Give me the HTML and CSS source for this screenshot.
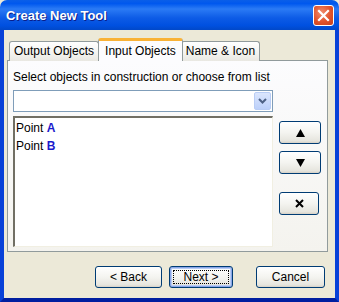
FILE: index.html
```html
<!DOCTYPE html>
<html lang="en">
  <head>
    <meta charset="UTF-8" />
    <title>Create New Tool</title>
    <link rel="stylesheet" href="styles.css">
  </head>
  <body>
    <div class="window">
      <div class="titlebar">
        <span class="title">Create New Tool</span>
        <span class="close">
          <svg width="13" height="13" viewBox="0 0 13 13">
            <path d="M2 2 L11 11 M11 2 L2 11" stroke="#fff" stroke-width="2.2" stroke-linecap="square" />
          </svg>
        </span>
      </div>
      <div class="client">
        <div class="tabs">
          <div class="tab">Output Objects</div>
          <div class="tab active">Input Objects</div>
          <div class="tab">Name &amp; Icon</div>
        </div>
        <div class="panel">
          <div class="hint">Select objects in construction or choose from list</div>
          <div class="combo">
            <span class="combo-btn">
              <svg width="9" height="6" viewBox="0 0 9 6">
                <path d="M1 1 L4.5 4.5 L8 1" fill="none" stroke="#4d6185" stroke-width="2" />
              </svg>
            </span>
          </div>
          <div class="list-row">
            <div class="list">
              <div class="item">Point <b>A</b></div>
              <div class="item">Point <b>B</b></div>
            </div>
            <div class="side">
              <button class="btn small">
                <svg width="9" height="8" viewBox="0 0 9 8"><path d="M4.5 0 L9 8 L0 8 Z" fill="#000" /></svg>
              </button>
              <button class="btn small">
                <svg width="9" height="8" viewBox="0 0 9 8"><path d="M0 0 L9 0 L4.5 8 Z" fill="#000" /></svg>
              </button>
              <button class="btn small del">
                <svg width="9" height="9" viewBox="0 0 9 9"><path d="M1 1 L8 8 M8 1 L1 8" stroke="#000" stroke-width="2" /></svg>
              </button>
            </div>
          </div>
        </div>
        <div class="footer">
          <button class="btn back">&lt; Back</button>
          <button class="btn next"><span class="focus">Next &gt;</span></button>
          <button class="btn cancel">Cancel</button>
        </div>
      </div>
    </div>
  </body>
</html>
```

FILE: styles.css
```css
* {
  padding: 0;
  margin: 0;
  box-sizing: border-box;
  font-family: "Liberation Sans", Arial, sans-serif;
}

body {
  width: 339px;
  height: 302px;
  overflow: hidden;
  background: #ece9d8;
}

.window {
  width: 339px;
  height: 302px;
  display: flex;
  flex-direction: column;
}

.titlebar {
  height: 30px;
  display: flex;
  align-items: center;
  justify-content: space-between;
  padding: 0 5px 0 6px;
  border-radius: 7px 7px 0 0;
  background: linear-gradient(#0a5ee8, #0058ee 12%, #2b7bf5 30%, #0d5be6 60%, #0050e0 85%, #0148c8);
}

.title {
  color: #fff;
  font-weight: bold;
  font-size: 13px;
  text-shadow: 1px 1px 0 #0a1e8a;
}

.close {
  width: 21px;
  height: 21px;
  display: flex;
  align-items: center;
  justify-content: center;
  border: 1px solid #fff;
  border-radius: 3px;
  background: radial-gradient(circle at 40% 35%, #f08d6e, #e1522b 55%, #c7401c);
}

.client {
  flex: 1;
  display: flex;
  flex-direction: column;
  border: 4px solid #0841d8;
  border-top: none;
  border-bottom-color: #001ea0;
  padding: 9px 7px 0 3px;
  background: #ece9d8;
}

.tabs {
  display: flex;
  align-items: flex-end;
  padding-left: 2px;
  height: 22px;
  position: relative;
  z-index: 1;
  margin-bottom: -1px;
}

.tab {
  height: 20px;
  padding: 0 4px;
  font-size: 12px;
  line-height: 19px;
  color: #000;
  border: 1px solid #919b9c;
  border-bottom: none;
  border-radius: 3px 3px 0 0;
  background: linear-gradient(#fff, #f3f3ef 60%, #e9e8e2);
}

.tab + .tab {
  margin-left: -1px;
}

.tab.active {
  height: 23px;
  padding: 0 6px;
  line-height: 20px;
  margin: 0 -1px 0 -1px;
  border-top: 3px solid #f9b237;
  background: #fcfcfe;
  position: relative;
  z-index: 2;
}

.panel {
  height: 192px;
  border: 1px solid #919b9c;
  background: linear-gradient(#fcfcfe, #f4f3ee);
  padding: 9px 54px 4px 5px;
  display: flex;
  flex-direction: column;
}

.hint {
  font-size: 12px;
  line-height: 15px;
  color: #000;
  margin-bottom: 5px;
}

.combo {
  height: 22px;
  border: 1px solid #7f9db9;
  background: #fff;
  display: flex;
  justify-content: flex-end;
  padding: 1px;
  margin-bottom: 4px;
}

.combo-btn {
  width: 17px;
  display: flex;
  align-items: center;
  justify-content: center;
  border-radius: 2px;
  border: 1px solid #b9cdf5;
  background: linear-gradient(#dbe6fd, #bcd0fa);
}

.list-row {
  flex: 1;
  display: flex;
  margin-right: -54px;
}

.list {
  width: 260px;
  background: #fff;
  border-top: 2px solid #716f64;
  border-left: 2px solid #716f64;
  border-right: 1px solid #f1efe2;
  border-bottom: 1px solid #f1efe2;
  padding: 1px 1px;
}

.item {
  font-size: 12px;
  line-height: 18px;
  color: #000;
}

.item b {
  color: #1a1acc;
}

.side {
  display: flex;
  flex-direction: column;
  align-items: flex-start;
  padding: 5px 0 0 6px;
}

.btn {
  height: 23px;
  border: 1px solid #003c74;
  border-radius: 3px;
  background: linear-gradient(#fff, #f4f4f0 50%, #e6e5de 90%, #d6d0c5);
  font-size: 12px;
  color: #000;
  display: flex;
  align-items: center;
  justify-content: center;
}

.small {
  width: 42px;
  margin-bottom: 7px;
}

.small.del {
  width: 40px;
  margin-top: 11px;
}

.footer {
  display: flex;
  justify-content: flex-end;
  padding: 14px 3px 0 0;
}

.back {
  width: 67px;
  height: 22px;
}

.next {
  width: 64px;
  height: 22px;
  margin-left: 7px;
  box-shadow: inset 0 0 0 1px #8aa6e8, inset 0 0 0 2px #b8ccf4;
  padding: 3px;
}

.next .focus {
  flex: 1;
  align-self: stretch;
  display: flex;
  align-items: center;
  justify-content: center;
  border: 1px dotted #000;
}

.cancel {
  width: 69px;
  height: 22px;
  margin-left: 23px;
}
```
